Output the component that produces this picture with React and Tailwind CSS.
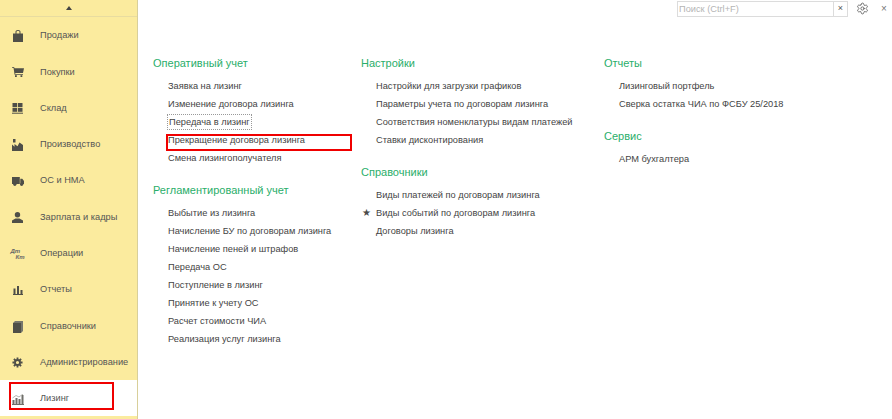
import React from "react";
import { Settings } from "lucide-react";

const Bag = () => (
  <svg width="10" height="12" viewBox="0 0 10 12" fill="#4f4f48">
    <path d="M0 3.500h2.500V1.800C2.500.700 3.500 0 5 0s2.500.700 2.500 1.800v1.700H10V12H0zM3.500 3.500h3V1.800C6.500 1.200 6 1 5 1s-1.500.2-1.500.8z" fillRule="evenodd" />
  </svg>
);
const Cart = () => (
  <svg width="12" height="10" viewBox="0 0 12 10" fill="#4f4f48">
    <path d="M0 0h2l.6 1.200H12l-1 4.800H3.200L3.400 7h7.600v.8H2.600L1.500.8H0z" />
    <rect x="3" y="8.200" width="1.800" height="1.800" />
    <rect x="8.500" y="8.200" width="1.800" height="1.800" />
  </svg>
);
const Grid = () => (
  <svg width="11" height="11" viewBox="0 0 11 11" fill="#4f4f48">
    <rect x="0.500" y="0" width="4.600" height="4" />
    <rect x="5.900" y="0" width="4.600" height="4" />
    <rect x="0.500" y="4.800" width="4.600" height="4" />
    <rect x="5.900" y="4.800" width="4.600" height="4" />
    <rect x="0" y="9.700" width="11" height="1" />
  </svg>
);
const Factory = () => (
  <svg width="11" height="12" viewBox="0 0 11 12" fill="#4f4f48">
    <path d="M0 12V5.500l2.500 2.200V5l3 2.300L7.500 3.500 11 6v6z" />
    <rect x="1" y="0" width="2.500" height="3.500" />
  </svg>
);
const Truck = () => (
  <svg width="12" height="9" viewBox="0 0 12 9" fill="#4f4f48">
    <path d="M0 0h7.800v7H0zM8.300 1.800h2L12 4v3H8.300z" />
    <circle cx="2.800" cy="7.300" r="1.600" />
    <circle cx="9.600" cy="7.300" r="1.600" />
  </svg>
);
const Person = () => (
  <svg width="11" height="11" viewBox="0 0 11 11" fill="#4f4f48">
    <circle cx="5.500" cy="2.800" r="2.700" />
    <path d="M0 11V8.500L3.500 6.500h4L11 8.500V11z" />
  </svg>
);
const Chart = () => (
  <svg width="10" height="9" viewBox="0 0 10 9" fill="#4f4f48">
    <rect x="0.500" y="2.500" width="2" height="5.500" />
    <rect x="4" y="0" width="2" height="8" />
    <rect x="7.500" y="4" width="2" height="4" />
    <rect x="0" y="8" width="10" height="1" />
  </svg>
);
const Books = () => (
  <svg width="10" height="12" viewBox="0 0 10 12" fill="#4f4f48">
    <path d="M0 2L2 0h8v10l-2 2H0z" fill="#77776c" />
    <path d="M0 2h8v10H0z" />
  </svg>
);
const Cog = () => (
  <svg width="11" height="11" viewBox="0 0 24 24" fill="none" stroke="#4f4f48" strokeWidth="4">
    <circle cx="12" cy="12" r="5.500" />
    <path d="M12 1v5M12 18v5M1 12h5M18 12h5M4.200 4.200l3.500 3.500M16.300 16.300l3.500 3.500M4.200 19.800l3.500-3.500M16.300 7.700l3.500-3.500" />
  </svg>
);
const Lease = () => (
  <svg width="12" height="11" viewBox="0 0 12 11" fill="#6f6f6a">
    <rect x="0.500" y="6" width="2" height="4" />
    <rect x="3.500" y="4" width="2" height="6" />
    <rect x="6.500" y="5" width="2" height="5" />
    <rect x="9.500" y="1" width="2" height="9" />
    <rect x="0" y="10" width="12" height="1" />
    <path d="M0.500 4L4 1.500 7 3l4-3" fill="none" stroke="#a5a5a0" strokeWidth="0.800" />
  </svg>
);
const DtKt = () => (
  <div className="flex flex-col text-[6px] leading-[6px] italic font-bold text-[#666]">
    <span>Дт</span>
    <span className="pl-[5px]">Кт</span>
  </div>
);

const menu = [
  ["Продажи", <Bag />],
  ["Покупки", <Cart />],
  ["Склад", <Grid />],
  ["Производство", <Factory />],
  ["ОС и НМА", <Truck />],
  ["Зарплата и кадры", <Person />],
  ["Операции", <DtKt />],
  ["Отчеты", <Chart />],
  ["Справочники", <Books />],
  ["Администрирование", <Cog />],
];

const Group = ({ title, items, last }) => (
  <div className={last ? "" : "mb-[14px]"}>
    <h3 className="h-[18px] mb-[5px] text-[11px] leading-[18px] font-normal text-[#2aae6a]">{title}</h3>
    {items.map((it) => (
      <Item key={it.text || it} {...(it.text ? it : { text: it })} />
    ))}
  </div>
);

const Item = ({ text, star, focus, marked }) => (
  <div className="relative h-[18px] pl-[15px] text-[9.250px] leading-[18px] text-[#444] whitespace-nowrap">
    {star && <span className="absolute left-[1px] top-0 text-[10px] text-[#4a4a4a]">★</span>}
    <span className={focus ? "px-[1px] -ml-[1px] py-[2px] border border-dotted border-[#999]" : ""}>{text}</span>
    {marked && <div className="absolute left-[13px] top-[3px] w-[186px] h-[17px] border-2 border-[#f00000]" />}
  </div>
);

export default function App() {
  return (
    <div className="flex h-[419px] w-[892px] overflow-hidden bg-white font-['Liberation_Sans',Arial,sans-serif]">
      <aside className="flex w-[138px] shrink-0 flex-col border-r border-[#d8cf9a] bg-[#fbeb9e]">
        <div className="flex h-[17px] shrink-0 items-center justify-center border-b border-[#e8dca0]">
          <div className="h-0 w-0 border-x-[3.500px] border-b-[4px] border-x-transparent border-b-[#444]" />
        </div>
        {menu.map(([label, icon]) => (
          <div key={label} className="flex h-[36.300px] shrink-0 items-center pt-[2px] text-[9.250px] text-[#555]">
            <div className="flex w-[40px] shrink-0 justify-center pr-[5px]">{icon}</div>
            <span>{label}</span>
          </div>
        ))}
        <div className="relative flex h-[36.500px] shrink-0 items-center pt-[2px] bg-white text-[9.250px] text-[#555]">
          <div className="flex w-[40px] shrink-0 justify-center pr-[5px]">
            <Lease />
          </div>
          <span>Лизинг</span>
          <div className="absolute left-[9px] top-[2.500px] h-[28px] w-[105px] border-2 border-[#f00000]" />
        </div>
      </aside>

      <main className="relative flex-1">
        <div className="absolute left-[539px] top-0 flex h-[17px] items-center">
          <div className="flex h-[16px] w-[171px] border border-[#dcdcdc] bg-white">
            <div className="flex-1 pl-[1px] text-[9.250px] leading-[14px] text-[#b5b5b5]">Поиск (Ctrl+F)</div>
            <div className="flex w-[14px] items-center justify-center border-l border-[#dcdcdc] text-[9px] text-[#555]">×</div>
          </div>
          <Settings className="ml-[8px] text-[#555]" size={13} strokeWidth={1.500} />
          <span className="ml-[12px] text-[10px] text-[#777]">×</span>
        </div>

        <div className="flex pl-[15px] pt-[54px]">
          <div className="w-[208px]">
            <Group
              title="Оперативный учет"
              items={[
                "Заявка на лизинг",
                "Изменение договора лизинга",
                { text: "Передача в лизинг", focus: true },
                { text: "Прекращение договора лизинга", marked: true },
                "Смена лизингополучателя",
              ]}
            />
            <Group
              title="Регламентированный учет"
              last
              items={[
                "Выбытие из лизинга",
                "Начисление БУ по договорам лизинга",
                "Начисление пеней и штрафов",
                "Передача ОС",
                "Поступление в лизинг",
                "Принятие к учету ОС",
                "Расчет стоимости ЧИА",
                "Реализация услуг лизинга",
              ]}
            />
          </div>
          <div className="w-[243px]">
            <Group
              title="Настройки"
              items={[
                "Настройки для загрузки графиков",
                "Параметры учета по договорам лизинга",
                "Соответствия номенклатуры видам платежей",
                "Ставки дисконтирования",
              ]}
            />
            <Group
              title="Справочники"
              last
              items={[
                "Виды платежей по договорам лизинга",
                { text: "Виды событий по договорам лизинга", star: true },
                "Договоры лизинга",
              ]}
            />
          </div>
          <div>
            <Group title="Отчеты" items={["Лизинговый портфель", "Сверка остатка ЧИА по ФСБУ 25/2018"]} />
            <Group title="Сервис" last items={["АРМ бухгалтера"]} />
          </div>
        </div>
      </main>
    </div>
  );
}
